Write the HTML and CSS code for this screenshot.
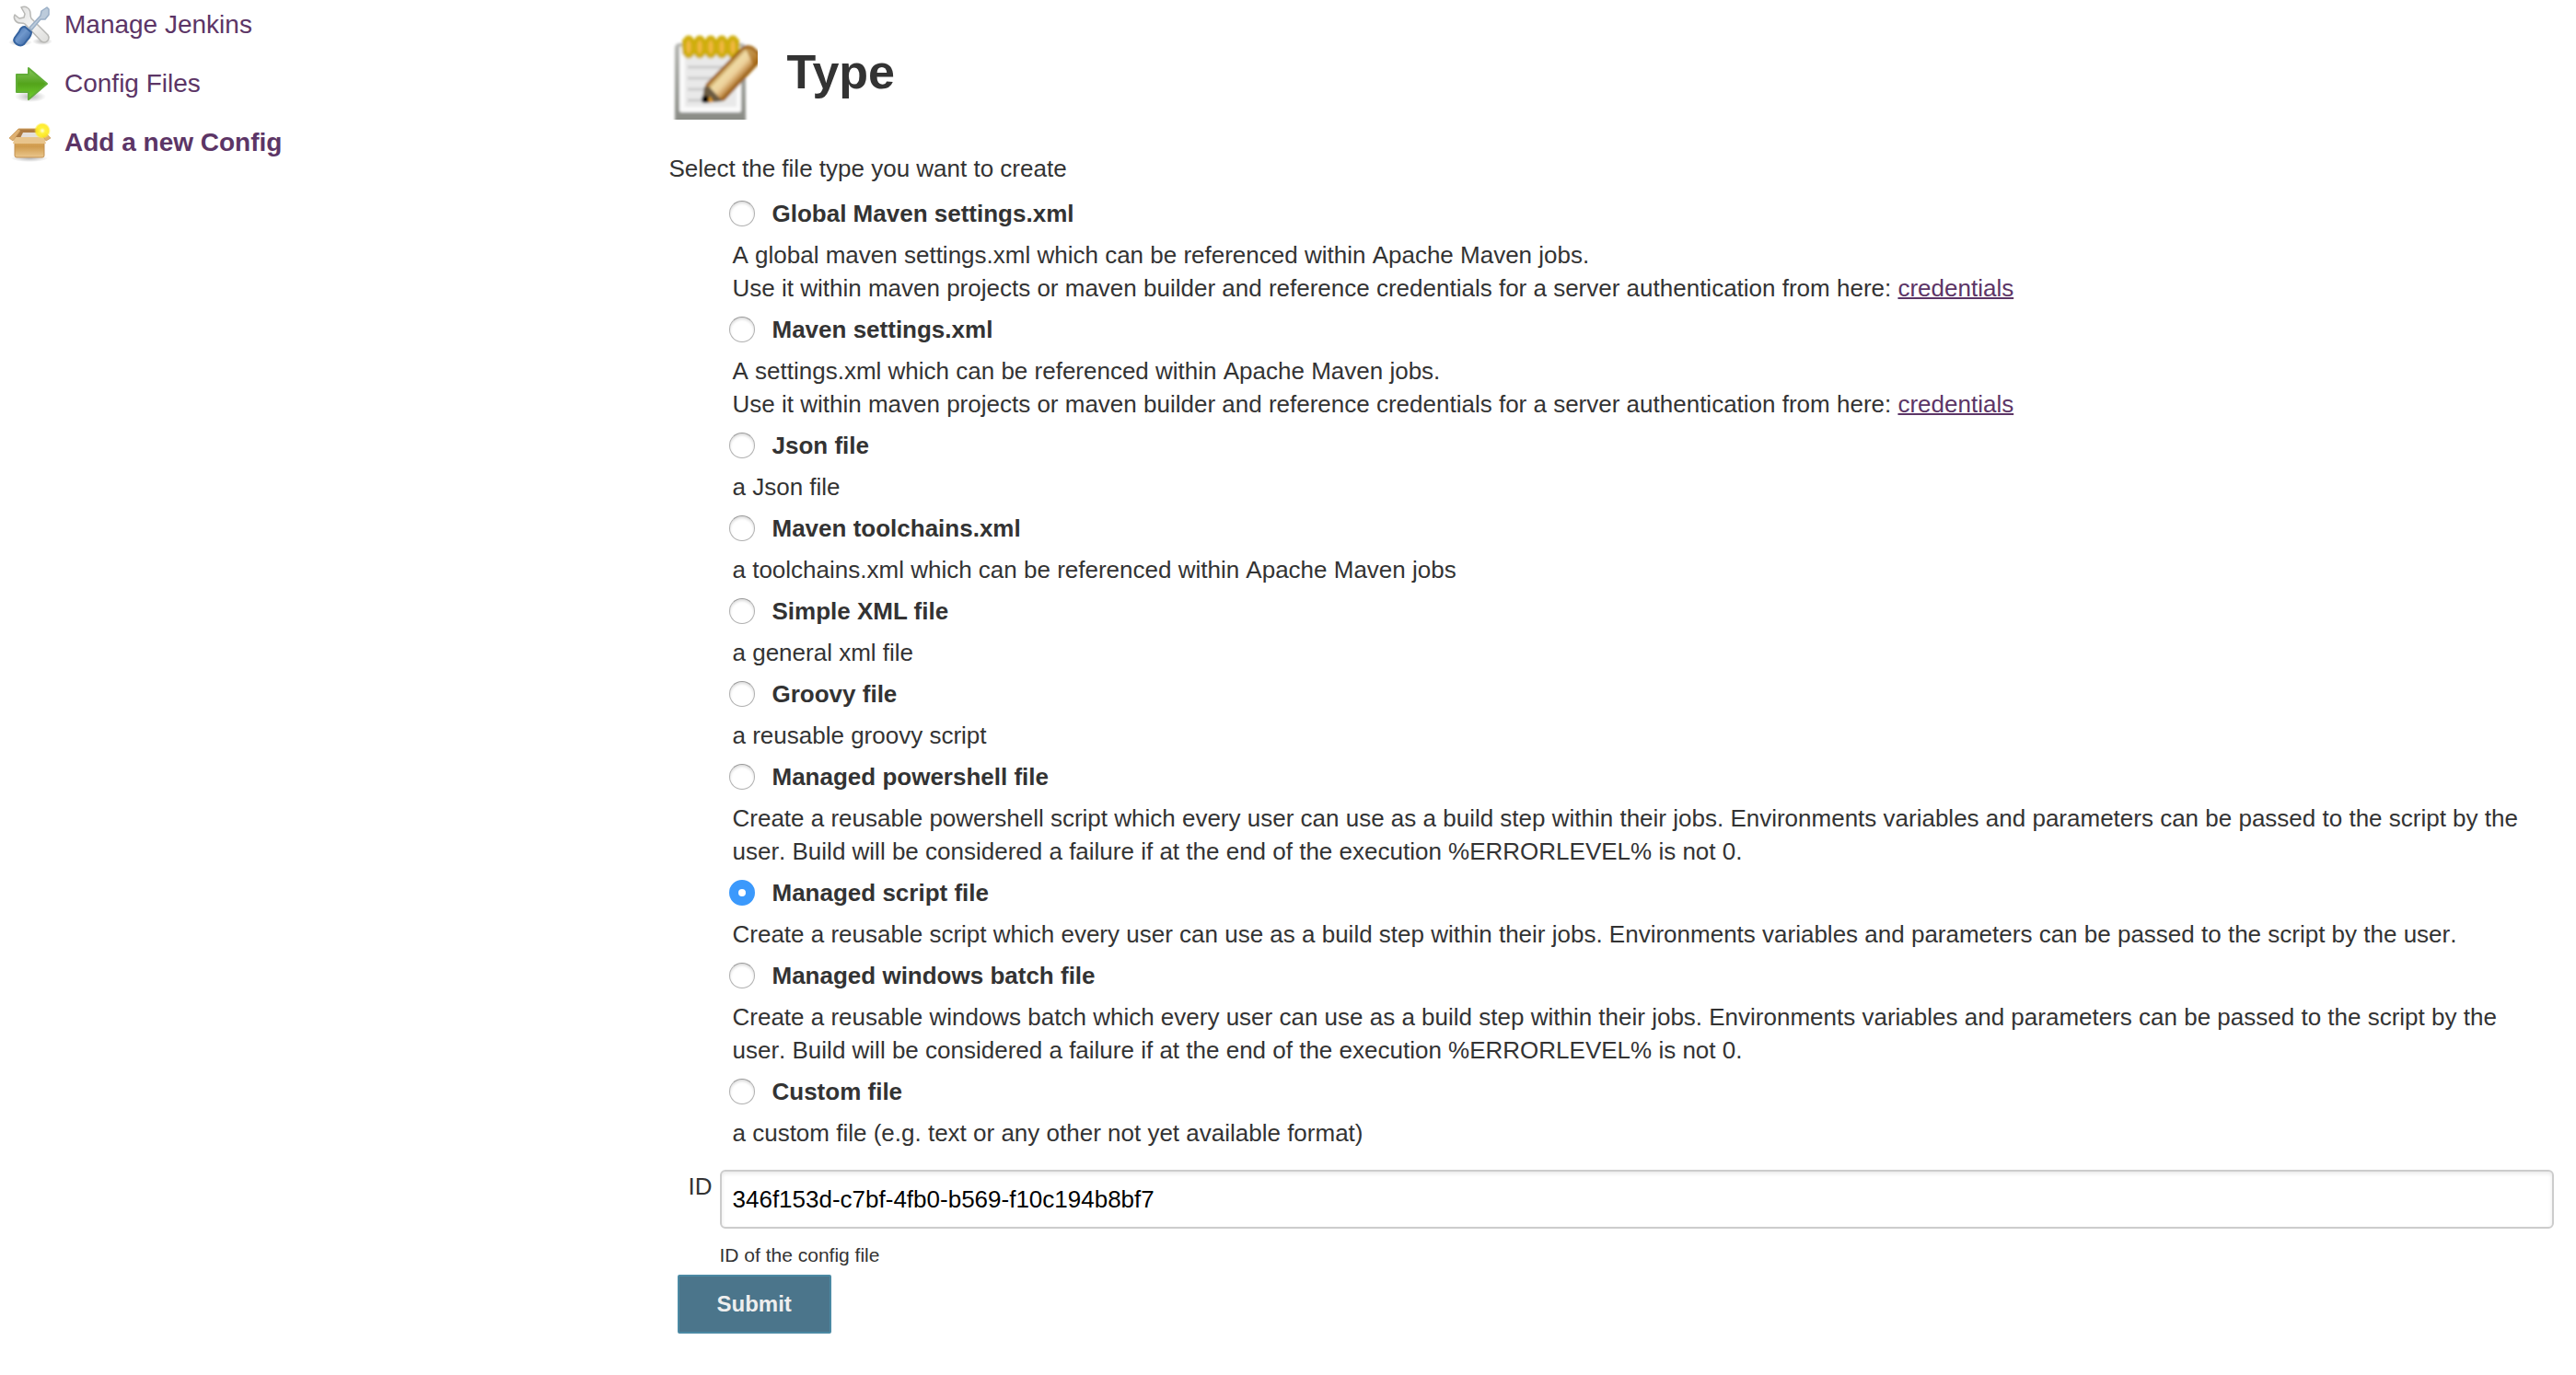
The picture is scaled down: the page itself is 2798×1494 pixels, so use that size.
FILE: index.html
```html
<!DOCTYPE html>
<html lang="en">
<head>
<meta charset="utf-8">
<title>Add a new Config</title>
<link rel="stylesheet" href="styles.css">
</head>
<body>
<div class="layout">
  <nav class="sidebar" aria-label="Tasks">
    <a class="task" href="#manage">
      <svg class="task-icon" viewBox="0 0 48 48" aria-hidden="true">
        <defs>
          <linearGradient id="steel" x1="0" y1="0" x2="1" y2="1"><stop offset="0" stop-color="#dededd"/><stop offset=".5" stop-color="#f4f4f3"/><stop offset="1" stop-color="#dcdcda"/></linearGradient>
          <linearGradient id="handle" x1="0" y1="0" x2="1" y2="1"><stop offset="0" stop-color="#3b68a8"/><stop offset=".45" stop-color="#7098cc"/><stop offset="1" stop-color="#2c5897"/></linearGradient>
          <radialGradient id="shade"><stop offset="0" stop-color="#000" stop-opacity=".28"/><stop offset="1" stop-color="#000" stop-opacity="0"/></radialGradient>
          <filter id="soften" x="-10%" y="-10%" width="120%" height="120%"><feGaussianBlur stdDeviation=".6"/></filter>
        </defs>
        <g filter="url(#soften)">
          <ellipse cx="13" cy="43" rx="13" ry="4" fill="url(#shade)"/>
          <ellipse cx="37" cy="42" rx="11" ry="4" fill="url(#shade)"/>
          <path d="M14 5c5-2 10 1 10 7 0 2 0 3 1 5l18 18c3 5-2 10-7 7L18 23c-1-1-3-1-5-1-5 0-8-5-6-9l5 4 5-1 1-4z" fill="url(#steel)" stroke="#b8b8b5" stroke-width="1.500" stroke-linejoin="round"/>
          <path d="M23 27l12-13 1-5 6-4 2 2 0 6-4 5-5 0-10 12z" fill="#bccbdb" stroke="#9aafc6" stroke-width="1.500" stroke-linejoin="round"/>
          <path d="M18 26l7 6c0 3-1 5-4 8l-4 5c-5 4-13-2-10-7l5-7c1-3 3-5 6-5z" fill="url(#handle)" stroke="#35639f" stroke-width="2"/>
        </g>
      </svg>
      <span>Manage Jenkins</span>
    </a>
    <a class="task" href="#files">
      <svg class="task-icon" viewBox="0 0 48 48" aria-hidden="true">
        <defs><linearGradient id="green" x1="0" y1="0" x2="0" y2="1"><stop offset="0" stop-color="#86c65c"/><stop offset=".5" stop-color="#53a31c"/><stop offset="1" stop-color="#72d22c"/></linearGradient></defs>
        <g filter="url(#soften)">
          <ellipse cx="24" cy="38" rx="17" ry="6" fill="url(#shade)"/>
          <path d="M9 14h13V7l20 17-20 17V33H9z" fill="url(#green)" stroke="#62ad38" stroke-width="2" stroke-linejoin="round"/>
        </g>
      </svg>
      <span>Config Files</span>
    </a>
    <a class="task task-current" href="#add" aria-current="page">
      <svg class="task-icon" viewBox="0 0 48 48" aria-hidden="true">
        <defs>
          <linearGradient id="carton" x1="0" y1="0" x2="0" y2="1"><stop offset="0" stop-color="#e3b56d"/><stop offset=".4" stop-color="#cf9a4c"/><stop offset="1" stop-color="#eac78d"/></linearGradient>
          <radialGradient id="spark"><stop offset="0" stop-color="#fffde0"/><stop offset=".35" stop-color="#fff23a"/><stop offset=".75" stop-color="#ffe91f" stop-opacity=".9"/><stop offset="1" stop-color="#ffee40" stop-opacity="0"/></radialGradient>
        </defs>
        <g filter="url(#soften)">
          <ellipse cx="23" cy="41" rx="20" ry="4" fill="url(#shade)"/>
          <path d="M11 9h27l3 10H7z" fill="#ad7a42" stroke="#d0a060"/>
          <path d="M16 13h19l3 6H13z" fill="#e4dfda"/>
          <path d="M7 20h32v18q0 2-2 2H9q-2 0-2-2z" fill="url(#carton)" stroke="#c39152"/>
          <path d="M7 18h32l2 7H5z" fill="#e8c48c"/>
          <path d="M11 9L1 19l4 3 8-11z M37 10l9 9-5 3-6-9z" fill="#dfb071" stroke="#c99a5c" stroke-width=".8"/>
          <circle cx="37" cy="11" r="9" fill="url(#spark)"/>
        </g>
      </svg>
      <span>Add a new Config</span>
    </a>
  </nav>

  <main class="main">
    <header class="heading">
      <svg class="heading-icon" viewBox="0 0 96 96" aria-hidden="true">
        <defs>
          <linearGradient id="pencil" gradientUnits="userSpaceOnUse" x1="58" y1="38" x2="77" y2="56"><stop offset="0" stop-color="#a0630c"/><stop offset=".3" stop-color="#f0dca6"/><stop offset=".55" stop-color="#ecd09a"/><stop offset=".75" stop-color="#d0a060"/><stop offset="1" stop-color="#8e5206"/></linearGradient>
          <linearGradient id="pad" x1="0" y1="0" x2="0" y2="1"><stop offset="0" stop-color="#b4b5b1"/><stop offset="1" stop-color="#868882"/></linearGradient>
          <filter id="soft" x="-10%" y="-10%" width="120%" height="120%"><feGaussianBlur stdDeviation="1.500"/></filter>
        </defs>
        <g filter="url(#soft)">
          <rect x="6" y="13" width="77" height="90" rx="5" fill="url(#pad)"/>
          <rect x="11" y="16" width="67" height="72" rx="2" fill="#fafafa"/>
          <rect x="17" y="20" width="56" height="62" fill="#e9e9e9"/>
          <path d="M20 39h48M20 51h42M20 63h36M20 75h30" stroke="#cacaca" stroke-width="3"/>
          <path d="M14 9h62v16H14z" fill="#d0ac10"/>
          <g fill="#f2b840" stroke="#cfae08" stroke-width="5">
            <ellipse cx="21" cy="17" rx="5" ry="10"/><ellipse cx="33" cy="17" rx="5" ry="10"/><ellipse cx="45" cy="17" rx="5" ry="10"/><ellipse cx="57" cy="17" rx="5" ry="10"/><ellipse cx="69" cy="17" rx="5" ry="10"/>
          </g>
          <path d="M41 58L78 20q5-5 12-2l12 10-43 46-20 2z" fill="url(#pencil)" stroke="#9c610e" stroke-width="3"/>
          <path d="M82 17h10l8 12-8 10z" fill="#a2620c" fill-opacity=".6"/>
          <path d="M38 60l5 0 12 13 3 3-20 2q-3-2-2-5z" fill="#6b5a40"/>
          <path d="M44 70l4 7h-6z" fill="#e09a1c"/>
          <circle cx="39" cy="74" r="4" fill="#000"/>
        </g>
      </svg>
      <h1 class="title">Type</h1>
    </header>

    <form class="form">
      <fieldset class="types">
        <legend class="intro">Select the file type you want to create</legend>
        <div class="type">
          <label class="type-label"><input class="radio" type="radio" name="type">Global Maven settings.xml</label>
          <p class="type-text">A global maven settings.xml which can be referenced within Apache Maven jobs.<br>Use it within maven projects or maven builder and reference credentials for a server authentication from here: <a class="link" href="#credentials">credentials</a></p>
        </div>
        <div class="type">
          <label class="type-label"><input class="radio" type="radio" name="type">Maven settings.xml</label>
          <p class="type-text">A settings.xml which can be referenced within Apache Maven jobs.<br>Use it within maven projects or maven builder and reference credentials for a server authentication from here: <a class="link" href="#credentials">credentials</a></p>
        </div>
        <div class="type">
          <label class="type-label"><input class="radio" type="radio" name="type">Json file</label>
          <p class="type-text">a Json file</p>
        </div>
        <div class="type">
          <label class="type-label"><input class="radio" type="radio" name="type">Maven toolchains.xml</label>
          <p class="type-text">a toolchains.xml which can be referenced within Apache Maven jobs</p>
        </div>
        <div class="type">
          <label class="type-label"><input class="radio" type="radio" name="type">Simple XML file</label>
          <p class="type-text">a general xml file</p>
        </div>
        <div class="type">
          <label class="type-label"><input class="radio" type="radio" name="type">Groovy file</label>
          <p class="type-text">a reusable groovy script</p>
        </div>
        <div class="type">
          <label class="type-label"><input class="radio" type="radio" name="type">Managed powershell file</label>
          <p class="type-text">Create a reusable powershell script which every user can use as a build step within their jobs. Environments variables and parameters can be passed to the script by the user. Build will be considered a failure if at the end of the execution %ERRORLEVEL% is not 0.</p>
        </div>
        <div class="type">
          <label class="type-label"><input class="radio" type="radio" name="type" checked>Managed script file</label>
          <p class="type-text">Create a reusable script which every user can use as a build step within their jobs. Environments variables and parameters can be passed to the script by the user.</p>
        </div>
        <div class="type">
          <label class="type-label"><input class="radio" type="radio" name="type">Managed windows batch file</label>
          <p class="type-text">Create a reusable windows batch which every user can use as a build step within their jobs. Environments variables and parameters can be passed to the script by the user. Build will be considered a failure if at the end of the execution %ERRORLEVEL% is not 0.</p>
        </div>
        <div class="type">
          <label class="type-label"><input class="radio" type="radio" name="type">Custom file</label>
          <p class="type-text">a custom file (e.g. text or any other not yet available format)</p>
        </div>
      </fieldset>

      <div class="field">
        <label class="field-label" for="config-id">ID</label>
        <div class="field-body">
          <input class="textbox" id="config-id" type="text" value="346f153d-c7bf-4fb0-b569-f10c194b8bf7" aria-describedby="config-id-help">
          <p class="help" id="config-id-help">ID of the config file</p>
        </div>
      </div>
      <button class="submit" type="submit">Submit</button>
    </form>
  </main>
</div>
</body>
</html>
```
FILE: styles.css
```css
* {
  box-sizing: border-box;
}

body {
  margin: 0;
  background: #fff;
  color: #333;
  font: 26px/36px "Liberation Sans", Arial, sans-serif;
}

p,
h1 {
  margin: 0;
}

.layout {
  display: flex;
}

.sidebar {
  flex: 0 0 25%;
  display: flex;
  flex-direction: column;
  gap: 16px;
  padding: 3px 9px;
}

.task {
  display: flex;
  align-items: center;
  gap: 13px;
  color: #5c3566;
  font-size: 28px;
  text-decoration: none;
}

.task-current {
  font-weight: bold;
}

.task-icon {
  width: 48px;
  height: 48px;
}

.main {
  flex: 1;
  min-width: 0;
  padding: 34px 24px 44px 27px;
}

.heading {
  display: flex;
  gap: 32px;
}

.heading-icon {
  width: 96px;
  height: 96px;
}

.title {
  padding-top: 12px;
  font-size: 52px;
  line-height: 64px;
}

.form {
  padding-top: 35px;
}

.types {
  margin: 0;
  padding: 0;
  border: 0;
}

.intro {
  padding: 0;
  margin-bottom: 4px;
}

.type {
  padding-left: 65px;
}

.type-label {
  display: flex;
  align-items: center;
  gap: 19px;
  height: 54px;
  font-weight: bold;
}

.type-text {
  padding-left: 4px;
  font-kerning: none;
}

.radio {
  appearance: none;
  width: 28px;
  height: 28px;
  margin: 0;
  border: 1px solid #b0b0b0;
  border-top-color: #999;
  border-radius: 50%;
  background: #fff;
  box-shadow: inset 0 2px 3px #ddd;
}

.radio:checked {
  border: 10px solid #3b99fc;
  box-shadow: none;
}

.link {
  color: #5c3566;
  text-decoration-thickness: 2px;
}

.field {
  display: flex;
  gap: 8px;
  padding: 22px 0 7px 21px;
}

.field-body {
  flex: 1;
}

.textbox {
  display: block;
  width: 100%;
  height: 64px;
  padding: 0 12px;
  border: 2px solid #ccc;
  border-radius: 6px;
  background: #fff;
  box-shadow: inset 0 2px 4px #e8e8e8;
  color: #000;
  font: inherit;
}

.help {
  padding-top: 15px;
  font-size: 21px;
  line-height: 28px;
}

.submit {
  height: 64px;
  margin-left: 9px;
  padding: 0 41px;
  border: 2px solid #4b89a3;
  border-radius: 2px;
  background: #4b758b;
  color: #eee;
  font: bold 24px/32px "Liberation Sans", Arial, sans-serif;
}
```
